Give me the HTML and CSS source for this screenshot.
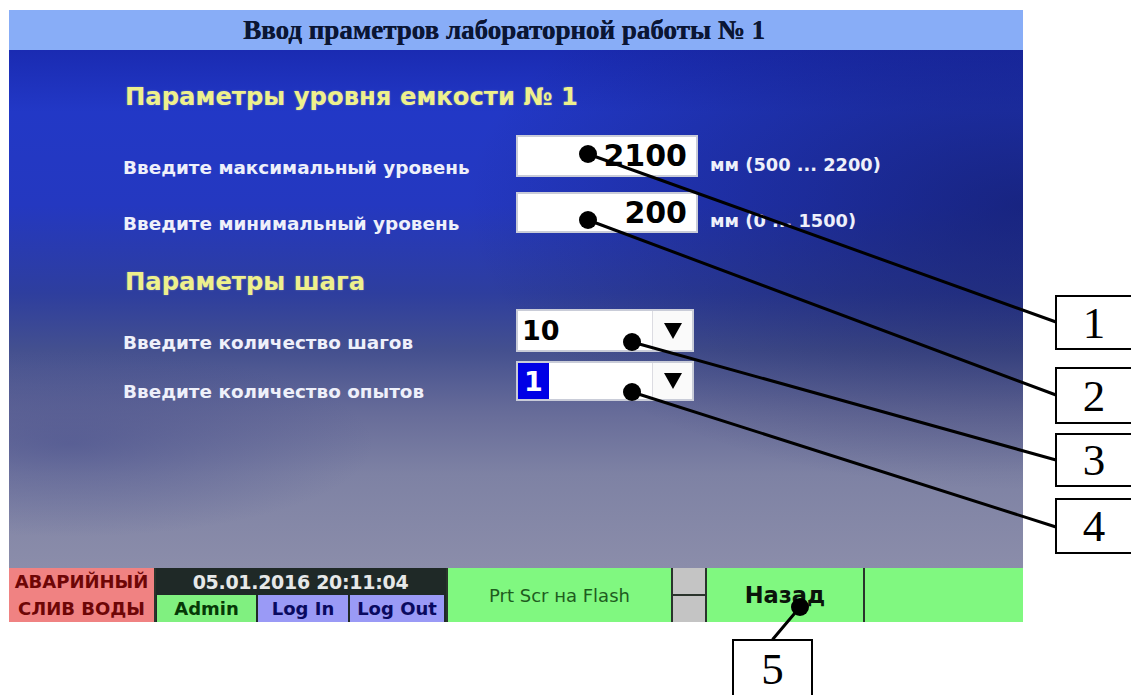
FILE: index.html
```html
<!DOCTYPE html>
<html lang="ru">
<head>
<meta charset="utf-8">
<title>Ввод параметров лабораторной работы</title>
<link rel="stylesheet" href="styles.css">
</head>
<body>
<div class="sheet">
  <div class="hmi">
    <div class="titlebar">Ввод праметров лабораторной работы № 1</div>

    <div class="work">
      <h2 class="section">Параметры уровня емкости № 1</h2>

      <div class="row r1">
        <span class="label">Введите максимальный уровень</span>
        <div class="field">2100</div>
        <span class="unit">мм (500 ... 2200)</span>
      </div>

      <div class="row r2">
        <span class="label">Введите минимальный уровень</span>
        <div class="field">200</div>
        <span class="unit">мм (0 ... 1500)</span>
      </div>

      <h2 class="section second">Параметры шага</h2>

      <div class="row r3">
        <span class="label">Введите количество шагов</span>
        <div class="combo">
          <span class="combo-value">10</span>
          <span class="combo-btn"><i class="tri"></i></span>
        </div>
      </div>

      <div class="row r4">
        <span class="label">Введите количество опытов</span>
        <div class="combo">
          <span class="combo-value"><span class="sel">1</span></span>
          <span class="combo-btn"><i class="tri"></i></span>
        </div>
      </div>
    </div>

    <div class="status">
      <div class="alarm"><span>АВАРИЙНЫЙ</span><span>СЛИВ ВОДЫ</span></div>
      <div class="session">
        <div class="clock">05.01.2016 20:11:04</div>
        <div class="users">
          <div class="user admin">Admin</div>
          <div class="user login">Log In</div>
          <div class="user logout">Log Out</div>
        </div>
      </div>
      <div class="key prt">Prt Scr на Flash</div>
      <div class="scroll"><span></span><span></span></div>
      <div class="key back">Назад</div>
      <div class="key spare"></div>
    </div>
  </div>

  <!-- leader lines from the controls to the numbered tags -->
  <svg class="leaders" width="1131" height="695" viewBox="0 0 1131 695">
    <g stroke="#000" stroke-width="3" stroke-linecap="round" fill="none">
      <line x1="588" y1="154" x2="1056" y2="322"/>
      <line x1="588" y1="220" x2="1056" y2="395"/>
      <line x1="632" y1="342" x2="1056" y2="460"/>
      <line x1="632" y1="392" x2="1056" y2="527"/>
      <line x1="800" y1="607" x2="773" y2="639"/>
    </g>
    <g fill="#000">
      <circle cx="588" cy="154" r="9"/>
      <circle cx="588" cy="220" r="9"/>
      <circle cx="632" cy="342" r="9"/>
      <circle cx="632" cy="392" r="9"/>
      <circle cx="800" cy="607" r="9"/>
    </g>
  </svg>

  <div class="tag t1">1</div>
  <div class="tag t2">2</div>
  <div class="tag t3">3</div>
  <div class="tag t4">4</div>
  <div class="tag t5">5</div>
</div>
</body>
</html>
```

FILE: styles.css
```css
* {
  box-sizing: border-box;
}

html,
body {
  margin: 0;
}

body {
  background: #fff;
  width: 1131px;
  height: 695px;
  overflow: hidden;
}

.sheet {
  position: relative;
  width: 1131px;
  height: 695px;
  padding: 10px 0 0 9px;
}

/* operator panel */
.hmi {
  width: 1014px;
  height: 612px;
  display: flex;
  flex-direction: column;
}

.titlebar {
  height: 40px;
  padding-right: 24px;
  background: #88adf7;
  display: flex;
  align-items: center;
  justify-content: center;
  font: bold 27px "Liberation Serif", serif;
  color: #0b1634;
  text-shadow: 0.4px 0 0 #0b1634;
}

.work {
  flex: 1;
  padding: 33px 0 0 114px;
  background:
    radial-gradient(ellipse 55% 55% at 100% 30%, rgba(14, 20, 78, 0.55), rgba(14, 20, 78, 0) 100%),
    radial-gradient(ellipse 30% 18% at 6% 76%, rgba(58, 66, 136, 0.45), rgba(58, 66, 136, 0) 100%),
    linear-gradient(180deg, #1a2bb2 0%, #2238c6 12%, #2438c0 30%, #2e3e9e 47%, #44508f 58%, #676c99 70%, #7e82a4 82%, #8b8daa 100%);
}

.section {
  margin: 0;
  padding-left: 2px;
  font: bold 24.3px/28px "DejaVu Sans", sans-serif;
  color: #eef08c;
  text-shadow: 0 0 2px rgba(255, 255, 200, 0.35);
}

.section.second {
  margin-top: 35px;
}

.row {
  display: flex;
  align-items: flex-end;
}

.r1 { margin-top: 24px; }
.r2 { margin-top: 15px; }
.r3 { margin-top: 13px; }
.r4 { margin-top: 9px; }

.label {
  width: 393px;
  font: bold 18.4px/19px "DejaVu Sans", sans-serif;
  color: #eef0fa;
}

.field {
  width: 182px;
  height: 42px;
  background: #fff;
  border: 2px solid #c9ccd8;
  padding-right: 9px;
  text-align: right;
  font: bold 30px/38px "DejaVu Sans", sans-serif;
  color: #000;
}

.r2 .field {
  height: 41px;
  line-height: 37px;
}

.unit {
  margin-left: 12px;
  padding-bottom: 2px;
  font: bold 17.8px/20px "DejaVu Sans", sans-serif;
  color: #eef0fa;
}

/* drop-down selectors */
.combo {
  width: 178px;
  height: 43px;
  display: flex;
  background: #fff;
  border: 2px solid #c9ccd8;
}

.r4 .combo {
  height: 40px;
}

.combo-value {
  flex: 1;
  display: flex;
  align-items: center;
  padding-left: 4px;
  font: bold 27px "DejaVu Sans", sans-serif;
  color: #000;
}

.r4 .combo-value {
  padding-left: 0;
  align-items: stretch;
}

.sel {
  width: 31px;
  display: flex;
  align-items: center;
  justify-content: center;
  background: #0000e6;
  color: #fff;
}

.combo-btn {
  width: 40px;
  display: flex;
  align-items: center;
  justify-content: center;
  border-left: 1px solid #dcdce2;
  background: #fafafa;
}

.tri {
  width: 0;
  height: 0;
  border-left: 9px solid transparent;
  border-right: 9px solid transparent;
  border-top: 16px solid #000;
}

/* bottom status bar */
.status {
  height: 54px;
  display: flex;
  gap: 2px;
  background: #2a342c;
}

.alarm {
  width: 145px;
  display: flex;
  flex-direction: column;
  align-items: center;
  justify-content: center;
  background: #f08282;
  color: #6e0606;
  font: bold 18px/27px "DejaVu Sans", sans-serif;
}

.session {
  width: 290px;
  display: flex;
  flex-direction: column;
  padding: 0 2px 0 1px;
  background: #1f2927;
}

.clock {
  height: 27px;
  display: flex;
  align-items: center;
  justify-content: center;
  font: bold 19px "DejaVu Sans", sans-serif;
  letter-spacing: -0.3px;
  color: #e6e8e8;
}

.users {
  flex: 1;
  display: flex;
  gap: 2px;
}

.user {
  display: flex;
  align-items: center;
  justify-content: center;
  font: bold 18px "DejaVu Sans", sans-serif;
}

.admin {
  width: 99px;
  background: #80f080;
  color: #063806;
}

.login {
  width: 90px;
  background: #9a9af6;
  color: #0a0a60;
}

.logout {
  width: 94px;
  background: #9a9af6;
  color: #0a0a60;
}

.key {
  display: flex;
  align-items: center;
  justify-content: center;
  background: #80f880;
}

.prt {
  width: 223px;
  font: 18px "DejaVu Sans", sans-serif;
  color: #1e5c1e;
}

.scroll {
  width: 32px;
  display: flex;
  flex-direction: column;
  gap: 2px;
}

.scroll span {
  flex: 1;
  background: #c4c4c4;
}

.back {
  width: 156px;
  font: bold 22.5px "DejaVu Sans", sans-serif;
  color: #0a140a;
}

.spare {
  width: 158px;
}

/* annotation overlay */
.leaders {
  position: absolute;
  left: 0;
  top: 0;
  pointer-events: none;
}

.tag {
  position: absolute;
  display: flex;
  align-items: center;
  justify-content: center;
  background: #fff;
  border: 2px solid #000;
  font: 45px "Liberation Serif", serif;
  color: #000;
}

.t1 { left: 1055px; top: 295px; width: 78px; height: 55px; }
.t2 { left: 1055px; top: 367px; width: 78px; height: 57px; }
.t3 { left: 1055px; top: 433px; width: 78px; height: 54px; }
.t4 { left: 1055px; top: 498px; width: 78px; height: 56px; }
.t5 { left: 732px; top: 639px; width: 81px; height: 60px; }
```
